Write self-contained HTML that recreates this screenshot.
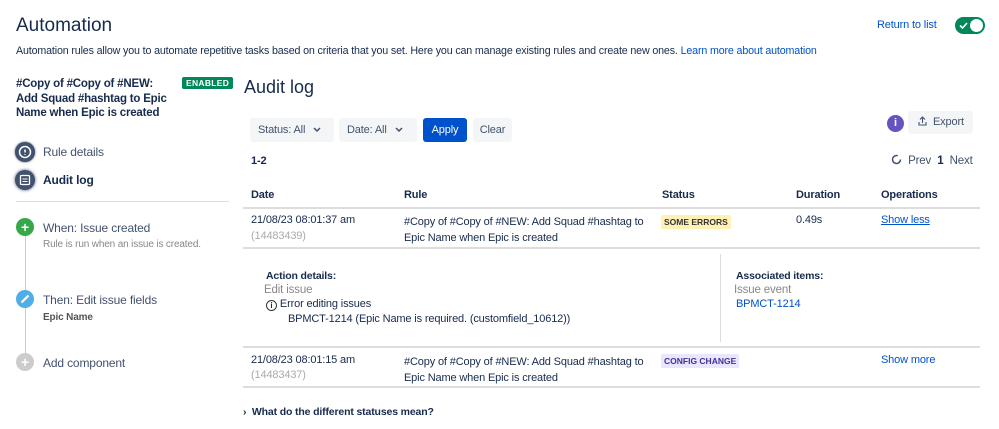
<!DOCTYPE html>
<html><head><style>
*{margin:0;padding:0;box-sizing:border-box}
body{width:999px;height:429px;background:#fff;font-family:"Liberation Sans",sans-serif;color:#172b4d;position:relative;overflow:hidden;font-size:11px;letter-spacing:-0.15px}
.a{position:absolute;white-space:nowrap}
.b{font-weight:bold}
.lk{color:#0052cc}
.hr{position:absolute;height:1px;background:#ddd}
.btn{position:absolute;background:#f4f5f7;border-radius:3px;height:24px;line-height:24px;font-size:11px;color:#42526e;padding:0 8px;white-space:nowrap}
.ic{position:absolute;width:20px;height:20px;border-radius:50%}
.chev{display:inline-block;vertical-align:middle;margin-left:8px}
</style></head><body>
<div class="a" style="left:16px;top:15px;font-size:19px;letter-spacing:0">Automation</div>
<div class="a" style="left:16px;top:45px;font-size:10.7px;letter-spacing:-0.15px">Automation rules allow you to automate repetitive tasks based on criteria that you set. Here you can manage existing rules and create new ones. <span class="lk">Learn more about automation</span></div>
<div class="a lk" style="left:877px;top:19px;font-size:11px">Return to list</div>
<div class="a" style="left:955px;top:17px;width:30px;height:17px;border-radius:9px;background:#00875a"><div style="position:absolute;right:2px;top:2px;width:13px;height:13px;border-radius:50%;background:#fff"></div><svg style="position:absolute;left:4px;top:4px" width="9" height="9" viewBox="0 0 9 9"><path d="M1 4.5l2.5 2.5 4.5-5" stroke="#fff" stroke-width="1.6" fill="none"/></svg></div>

<div class="a b" style="left:16px;top:77px;font-size:11.5px;line-height:14.5px;letter-spacing:-0.2px">#Copy of #Copy of #NEW:<br>Add Squad #hashtag to Epic<br>Name when Epic is created</div>
<div class="a b" style="left:182px;top:77px;background:#00875a;color:#fff;font-size:8.5px;padding:1px 4px;border-radius:2px;letter-spacing:.3px">ENABLED</div>

<div class="ic" style="left:15px;top:142px;background:#42526e;box-shadow:0 0 2px #42526e"><svg width="20" height="20"><circle cx="10" cy="10" r="5.5" stroke="#fff" stroke-width="1.5" fill="none"/><path d="M10 7.5v3M10 12v.8" stroke="#fff" stroke-width="1.5"/></svg></div>
<div class="a" style="left:43px;top:145px;color:#42526e;font-size:12px">Rule details</div>
<div class="ic" style="left:15px;top:170px;background:#42526e;box-shadow:0 0 3px #42526e"><svg width="20" height="20"><rect x="5.5" y="5.5" width="9" height="9" rx="1" stroke="#fff" stroke-width="1.3" fill="none"/><path d="M7.5 9h5M7.5 11.5h5" stroke="#fff"/></svg></div>
<div class="a b" style="left:43px;top:173px;font-size:12px">Audit log</div>
<div class="hr" style="left:16px;top:201px;width:213px"></div>

<div class="a" style="left:25px;top:228px;width:1px;height:135px;background:#ccc"></div>
<div class="ic" style="left:16px;top:218px;width:18px;height:18px;background:#36a84a;color:#fff;text-align:center;line-height:18px;font-weight:bold;font-size:14px">+</div>
<div class="a" style="left:43px;top:221px;color:#42526e;font-size:12px">When: Issue created</div>
<div class="a" style="left:43px;top:239px;font-size:10px;color:#888">Rule is run when an issue is created.</div>
<div class="ic" style="left:16px;top:290px;width:18px;height:18px;background:#4faee5"><svg width="18" height="18"><path d="M5.5 12.5l7-7" stroke="#fff" stroke-width="2.2"/></svg></div>
<div class="a" style="left:43px;top:293px;color:#42526e;font-size:12px">Then: Edit issue fields</div>
<div class="a b" style="left:43px;top:312px;font-size:10px;color:#555">Epic Name</div>
<div class="ic" style="left:16px;top:353px;width:18px;height:18px;background:#ccc;color:#fff;text-align:center;line-height:18px;font-weight:bold;font-size:14px">+</div>
<div class="a" style="left:43px;top:356px;color:#42526e;font-size:12px">Add component</div>

<div class="a" style="left:244px;top:77px;font-size:18px;letter-spacing:0">Audit log</div>
<div class="btn" style="left:250px;top:118px;width:84px">Status: All<svg class="chev" width="8" height="6"><path d="M1 1l3 3 3-3" stroke="#42526e" stroke-width="1.5" fill="none"/></svg></div>
<div class="btn" style="left:339px;top:118px;width:78px">Date: All<svg class="chev" width="8" height="6"><path d="M1 1l3 3 3-3" stroke="#42526e" stroke-width="1.5" fill="none"/></svg></div>
<div class="btn" style="left:423px;top:118px;width:44px;background:#0052cc;color:#fff;text-align:center;padding:0">Apply</div>
<div class="btn" style="left:473px;top:118px;width:39px;text-align:center;padding:0">Clear</div>
<div class="ic" style="left:887px;top:115px;width:17px;height:17px;background:#6554c0;color:#fff;text-align:center;line-height:17px;font-weight:bold;font-size:11px">i</div>
<div class="btn" style="left:908px;top:111px;width:65px;height:23px;line-height:23px;padding:0 0 0 10px"><svg width="9" height="10" style="vertical-align:-1px;margin-right:6px"><path d="M4.5 7V1M2 3.5l2.5-2.5 2.5 2.5M1 6v3h7V6" stroke="#42526e" stroke-width="1.1" fill="none"/></svg>Export</div>
<div class="a b" style="left:251px;top:155px">1-2</div>
<div class="a" style="left:891px;top:154px;color:#42526e;font-size:11.5px"><svg width="11" height="11" style="vertical-align:-1px"><circle cx="5.5" cy="5.5" r="4" stroke="#42526e" stroke-width="1.5" fill="none" stroke-dasharray="20 5"/></svg> &nbsp;Prev &nbsp;<b style="color:#172b4d">1</b> &nbsp;Next</div>

<div class="a b" style="left:251px;top:189px">Date</div>
<div class="a b" style="left:404px;top:189px">Rule</div>
<div class="a b" style="left:662px;top:189px">Status</div>
<div class="a b" style="left:796px;top:189px">Duration</div>
<div class="a b" style="left:881px;top:189px">Operations</div>
<div class="hr" style="left:243px;top:207px;width:737px;height:2px"></div>

<div class="a" style="left:251px;top:214px">21/08/23 08:01:37 am</div>
<div class="a" style="left:251px;top:230px;color:#aaa">(14483439)</div>
<div class="a" style="left:404px;top:214px;line-height:16px">#Copy of #Copy of #NEW: Add Squad #hashtag to<br>Epic Name when Epic is created</div>
<div class="a b" style="left:661px;top:215px;background:#fff0b3;font-size:8.5px;padding:2px 3px;border-radius:2px;color:#333;letter-spacing:0">SOME ERRORS</div>
<div class="a" style="left:796px;top:214px">0.49s</div>
<div class="a lk" style="left:881px;top:214px;text-decoration:underline">Show less</div>
<div class="hr" style="left:243px;top:247px;width:737px;height:2px"></div>

<div class="a b" style="left:266px;top:270px;font-size:10.5px">Action details:</div>
<div class="a" style="left:264px;top:284px;color:#888;font-size:11.5px">Edit issue</div>
<div class="a" style="left:266px;top:298px"><span style="display:inline-block;width:11px;height:11px;border:1.3px solid #333;border-radius:50%;font-size:8px;line-height:9px;text-align:center;font-weight:bold;vertical-align:-1px;letter-spacing:0">i</span> Error editing issues</div>
<div class="a" style="left:288px;top:313px">BPMCT-1214 (Epic Name is required. (customfield_10612))</div>
<div class="a" style="left:720px;top:254px;width:1px;height:88px;background:#ddd"></div>
<div class="a b" style="left:736px;top:270px;font-size:10.5px">Associated items:</div>
<div class="a" style="left:734px;top:284px;color:#888;font-size:11.5px">Issue event</div>
<div class="a lk" style="left:736px;top:298px">BPMCT-1214</div>
<div class="hr" style="left:243px;top:346px;width:737px;height:2px"></div>

<div class="a" style="left:251px;top:354px">21/08/23 08:01:15 am</div>
<div class="a" style="left:251px;top:369px;color:#aaa">(14483437)</div>
<div class="a" style="left:404px;top:354px;line-height:16px">#Copy of #Copy of #NEW: Add Squad #hashtag to<br>Epic Name when Epic is created</div>
<div class="a b" style="left:661px;top:354px;background:#eae6ff;font-size:8.5px;padding:2px 3px;border-radius:2px;color:#403294;letter-spacing:0">CONFIG CHANGE</div>
<div class="a lk" style="left:881px;top:354px">Show more</div>
<div class="hr" style="left:243px;top:386px;width:737px;height:2px"></div>

<div class="a b" style="left:243px;top:406px;font-size:10.5px">› &nbsp;What do the different statuses mean?</div>
</body></html>
